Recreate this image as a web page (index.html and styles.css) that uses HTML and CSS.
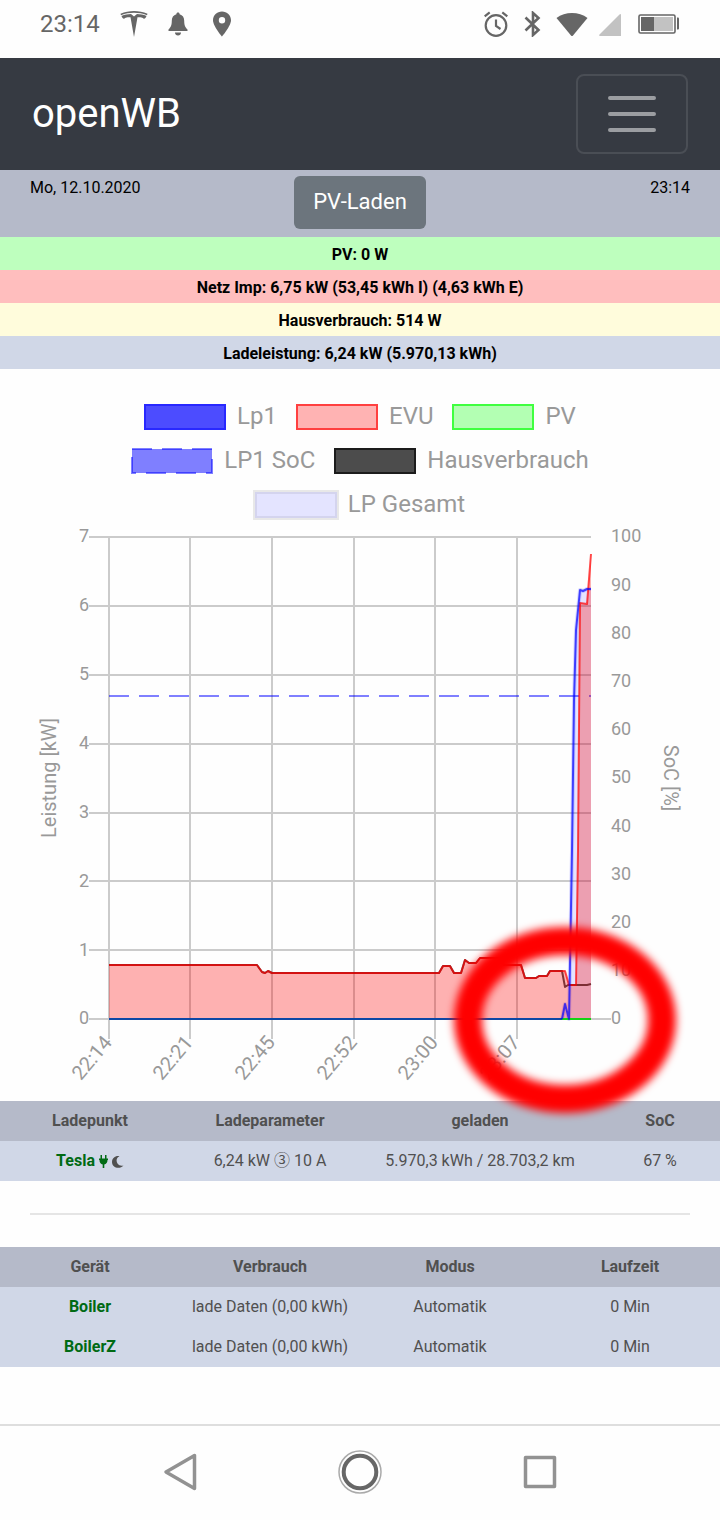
FILE: index.html
```html
<!DOCTYPE html>
<html lang="de">
<head>
  <meta charset="UTF-8">
  <meta name="viewport" content="width=device-width, initial-scale=1.0">
  <title>openWB</title>
  <link rel="stylesheet" href="styles.css">
</head>
<body>
  <!-- Status bar -->
  <div class="statusbar">
    <div class="status-left">
      <span class="status-time">23:14</span>
      <svg class="icon-tesla" width="28" height="28" viewBox="0 0 28 28">
        <path d="M.5 3.8C9 .2 19 .2 27.500 3.800L27 5.200C18.500 2 9.500 2 1 5.200Z"/>
        <path d="M1.500 6C4.500 4.800 8 4.200 11 4.100L14 6.500L17 4.100C20 4.200 23.500 4.800 26.500 6C26 7.500 25 8.500 23.800 9C23.500 7.800 22 7.300 17.500 7.300L14 27L10.500 7.300C6 7.300 4.500 7.800 4.200 9C3 8.500 2 7.500 1.500 6Z"/>
      </svg>
      <svg class="icon-bell" width="20" height="24" viewBox="0 0 20 24">
        <path d="M10 .5c1 0 1.600.7 1.600 1.700 3 .8 4.600 3.300 4.600 6.500 0 4.500 1 6.500 3.300 8.700v1.600H.5v-1.600C2.800 15.200 3.800 13.200 3.800 8.700c0-3.200 1.600-5.700 4.600-6.500C8.400 1.200 9 .5 10 .5z"/>
        <path d="M7 20.500h6c0 1.800-1.300 3-3 3s-3-1.200-3-3z"/>
      </svg>
      <svg class="icon-pin" width="18" height="26" viewBox="0 0 18 26">
        <path fill-rule="evenodd" d="M9 .5C4 .5 0 4.300 0 9.200C0 15 9 25.500 9 25.500S18 15 18 9.200C18 4.300 14 .5 9 .5zM9 6a3.200 3.200 0 1 1 0 6.400a3.200 3.200 0 1 1 0-6.400z"/>
      </svg>
    </div>
    <div class="status-right">
      <svg width="24" height="26" viewBox="0 0 24 26">
        <circle cx="12" cy="14.500" r="10.300" fill="none" stroke="#666" stroke-width="2.200"/>
        <path d="M12 8.500v6.500l4.500 3M.7 5.300l5-4M23.300 5.300l-5-4" fill="none" stroke="#666" stroke-width="2.200"/>
      </svg>
      <svg width="18" height="26" viewBox="0 0 18 26">
        <path d="M2.500 6.500L15.500 19L10 24V2l5.500 5L2.500 19.500" fill="none" stroke="#666" stroke-width="2.600"/>
      </svg>
      <svg width="32" height="26" viewBox="0 0 32 26">
        <path d="M.5 7C9 .2 23 .2 31.500 7L17 24.500Q16 25.500 15 24.500Z"/>
      </svg>
      <svg width="22" height="26" viewBox="0 0 22 26">
        <path d="M22 3.500V25H1Q-.5 24.500.5 23.500L20.500 3.500Q21.500 2.500 22 3.500z" fill="#c2c2c2"/>
      </svg>
      <svg width="42" height="26" viewBox="0 0 42 26">
        <rect x="1" y="4" width="36" height="18" rx="1.500" fill="none" stroke="#666" stroke-width="1.600"/>
        <rect x="3" y="6" width="13" height="14"/>
        <rect x="16" y="6" width="19" height="14" fill="#c2c2c2"/>
        <path d="M39 6.500h1q1 0 1 1v10q0 1-1 1h-1z"/>
      </svg>
    </div>
  </div>

  <!-- Navigation -->
  <nav class="navbar">
    <a class="navbar-brand" href="#">openWB</a>
    <button class="navbar-toggler" type="button" aria-label="Menü">
      <svg width="60" height="60" viewBox="0 0 30 30">
        <path d="M4 7h22M4 15h22M4 23h22" stroke="rgba(255,255,255,0.5)" stroke-width="2" stroke-linecap="round"/>
      </svg>
    </button>
  </nav>

  <main>
    <div class="date-row">
      <span class="date">Mo, 12.10.2020</span>
      <button class="mode-button" type="button">PV-Laden</button>
      <span class="time">23:14</span>
    </div>

    <div class="info-row pv">PV: 0 W</div>
    <div class="info-row evu">Netz Imp: 6,75 kW (53,45 kWh I) (4,63 kWh E)</div>
    <div class="info-row haus">Hausverbrauch: 514 W</div>
    <div class="info-row ladeleistung">Ladeleistung: 6,24 kW (5.970,13 kWh)</div>

    <!-- Live chart -->
    <div class="chart">
      <ul class="legend">
        <li><span class="swatch swatch-lp1"></span>Lp1</li>
        <li><span class="swatch swatch-evu"></span>EVU</li>
        <li><span class="swatch swatch-pv"></span>PV</li>
        <li>
          <svg class="swatch" width="82" height="26" viewBox="0 0 82 26">
            <rect x="1" y="1" width="80" height="24" fill="rgba(0,0,255,0.5)" stroke="rgba(0,0,255,0.5)" stroke-width="2" stroke-dasharray="20 10"/>
          </svg>LP1 SoC
        </li>
        <li><span class="swatch swatch-haus"></span>Hausverbrauch</li>
        <li><span class="swatch swatch-gesamt"></span>LP Gesamt</li>
      </ul>

      <svg class="plot" viewBox="0 0 720 575">
        <defs>
          <filter id="soft" x="-20%" y="-20%" width="140%" height="140%">
            <feGaussianBlur stdDeviation="4"/>
          </filter>
        </defs>

        <path class="grid" d="M89 11H591M89 80H591M89 149H591M89 218H591M89 287H591M89 355H591M89 424H591M89 493H611"/>
        <path class="grid" d="M109 11V513M190 11V513M272 11V513M354 11V513M435 11V513M517 11V513"/>

        <!-- LP Gesamt -->
        <path fill="rgba(0,0,255,0.1)" d="M562 493L565 478L569 493L572 324L574 174L576 104L580 64L583 65L587 63H591V493Z"/>
        <path class="line line-gesamt" stroke="rgba(0,0,255,0.15)" d="M562 493L565 478L569 493L572 324L574 174L576 104L580 64L583 65L587 63H591"/>
        <!-- Hausverbrauch -->
        <path class="line" stroke="rgba(0,0,0,0.7)" d="M109 439H257L262 446L265 447L268 445L272 447H439L443 440H450L454 447H461L465 434L469 437H476L480 432H500L504 439H521L525 452H536L539 450H547L550 445H562L565 461L568 459H587L591 458"/>
        <!-- SoC -->
        <path class="line" stroke="rgba(0,0,255,0.5)" stroke-dasharray="20 10" d="M109 170H591"/>
        <!-- EVU -->
        <path fill="rgba(255,0,0,0.3)" d="M109 439H257L262 446L265 447L268 445L272 447H439L443 440H450L454 447H461L465 434L469 437H476L480 432H500L504 439H521L525 452H536L539 450H547L550 445H565L569 459H576L578 324L580 77L587 78L591 28V493H109Z"/>
        <path class="line" stroke="rgba(255,0,0,0.7)" d="M109 439H257L262 446L265 447L268 445L272 447H439L443 440H450L454 447H461L465 434L469 437H476L480 432H500L504 439H521L525 452H536L539 450H547L550 445H565L569 459H576L578 324L580 77L587 78L591 28"/>
        <!-- PV -->
        <path class="line" stroke="#14d214" d="M109 493H591"/>
        <!-- Lp1 -->
        <path class="line" stroke="#0d47a5" d="M109 493H562"/>
        <path class="line" stroke="rgba(0,0,255,0.7)" d="M562 493L565 478L569 493L572 324L574 174L576 104L580 64L583 65L587 63H591"/>

        <g class="ticks" text-anchor="end">
          <text x="89" y="16">7</text>
          <text x="89" y="85">6</text>
          <text x="89" y="154">5</text>
          <text x="89" y="223">4</text>
          <text x="89" y="292">3</text>
          <text x="89" y="361">2</text>
          <text x="89" y="430">1</text>
          <text x="89" y="498">0</text>
        </g>
        <g class="ticks">
          <text x="611" y="16">100</text>
          <text x="611" y="65">90</text>
          <text x="611" y="113">80</text>
          <text x="611" y="161">70</text>
          <text x="611" y="209">60</text>
          <text x="611" y="257">50</text>
          <text x="611" y="306">40</text>
          <text x="611" y="354">30</text>
          <text x="611" y="402">20</text>
          <text x="611" y="450">10</text>
          <text x="611" y="498">0</text>
        </g>
        <g class="labels" text-anchor="end">
          <text transform="translate(113 517) rotate(-50)">22:14</text>
          <text transform="translate(194 517) rotate(-50)">22:21</text>
          <text transform="translate(276 517) rotate(-50)">22:45</text>
          <text transform="translate(358 517) rotate(-50)">22:52</text>
          <text transform="translate(439 517) rotate(-50)">23:00</text>
          <text transform="translate(521 517) rotate(-50)">23:07</text>
        </g>
        <g class="labels" text-anchor="middle">
          <text transform="translate(56 252) rotate(-90)">Leistung [kW]</text>
          <text transform="translate(664 252) rotate(90)">SoC [%]</text>
        </g>

        <!-- Marker -->
        <ellipse cx="565" cy="494" rx="97" ry="79" fill="none" stroke="#f00" stroke-width="28" filter="url(#soft)"/>
      </svg>
    </div>

    <!-- Charge points -->
    <table class="data-table">
      <colgroup>
        <col class="col-3"><col class="col-3"><col class="col-4"><col class="col-2">
      </colgroup>
      <thead>
        <tr><th>Ladepunkt</th><th>Ladeparameter</th><th>geladen</th><th>SoC</th></tr>
      </thead>
      <tbody>
        <tr>
          <td>
            <span class="name">Tesla</span>
            <svg class="icon-plug" width="9" height="13" viewBox="0 0 9 13">
              <path d="M1.500 0h1.500v3.500h3V0h1.500v3.500H9v1.500h-.5c0 2.800-1.200 4-3.200 4.400V13H3.700V9.400C1.700 9 .5 7.800.5 5H0V3.500h1.500z"/>
            </svg>
            <svg class="icon-moon" width="12" height="12" viewBox="0 0 12 12">
              <path d="M7.500.3C4.500 1.500 3.800 5 5.500 7.500C7 9.500 9 10 11.500 9.500C8 13.500 0 12.200 0 6C0 2 3.800-.6 7.500.3z"/>
            </svg>
          </td>
          <td>6,24 kW ③ 10 A</td>
          <td>5.970,3 kWh / 28.703,2 km</td>
          <td>67 %</td>
        </tr>
      </tbody>
    </table>

    <hr>

    <!-- Smart home devices -->
    <table class="data-table">
      <thead>
        <tr><th>Gerät</th><th>Verbrauch</th><th>Modus</th><th>Laufzeit</th></tr>
      </thead>
      <tbody>
        <tr>
          <td><span class="name">Boiler</span></td>
          <td>lade Daten (0,00 kWh)</td>
          <td>Automatik</td>
          <td>0 Min</td>
        </tr>
        <tr>
          <td><span class="name">BoilerZ</span></td>
          <td>lade Daten (0,00 kWh)</td>
          <td>Automatik</td>
          <td>0 Min</td>
        </tr>
      </tbody>
    </table>
  </main>

  <!-- System buttons -->
  <div class="system-nav">
    <button type="button" aria-label="Zurück">
      <svg width="44" height="44" viewBox="0 0 44 44">
        <path d="M36.500 5.500V38.500L8 22z" fill="none" stroke="#929292" stroke-width="3.500" stroke-linejoin="round"/>
      </svg>
    </button>
    <button type="button" aria-label="Startseite">
      <svg width="44" height="44" viewBox="0 0 44 44">
        <circle cx="22" cy="22" r="21" fill="none" stroke="#aaa" stroke-width="1.500"/>
        <circle cx="22" cy="22" r="16.300" fill="none" stroke="#666" stroke-width="4"/>
      </svg>
    </button>
    <button type="button" aria-label="Letzte Apps">
      <svg width="44" height="44" viewBox="0 0 44 44">
        <rect x="7.500" y="7.500" width="29" height="29" fill="none" stroke="#929292" stroke-width="3.500" stroke-linejoin="round"/>
      </svg>
    </button>
  </div>
</body>
</html>
```

FILE: styles.css
```css
* {
  box-sizing: border-box;
}

body {
  margin: 0;
  min-height: 100vh;
  display: flex;
  flex-direction: column;
  background-color: #fefefe;
  color: #505050;
  font-family: Roboto, "Noto Sans CJK JP", sans-serif;
  font-size: 16px;
  line-height: 24px;
}

main {
  flex: 1;
}

svg {
  display: block;
}

button {
  font-family: inherit;
  cursor: pointer;
}

/* Status bar */
.statusbar {
  display: flex;
  justify-content: space-between;
  align-items: center;
  height: 58px;
  padding: 0 40px 10px;
  color: #666;
  fill: #666;
}

.status-left,
.status-right {
  display: flex;
  align-items: center;
}

.status-left {
  gap: 20px;
}

.status-right {
  gap: 15px;
}

.status-right svg:nth-child(4) {
  margin-left: -4px;
}

.status-right svg:nth-child(5) {
  margin-left: 2px;
}

.icon-pin {
  margin-left: 5px;
}

.status-time {
  font-size: 24px;
}

/* Navigation */
.navbar {
  display: flex;
  justify-content: space-between;
  align-items: center;
  padding: 16px 32px;
  background-color: #363a42;
}

.navbar-brand {
  color: #fff;
  font-size: 40px;
  line-height: 60px;
  text-decoration: none;
}

.navbar-toggler {
  padding: 8px 24px;
  background: none;
  border: 2px solid rgba(255, 255, 255, 0.1);
  border-radius: 8px;
}

/* Date and charge mode */
.date-row {
  display: grid;
  grid-template-columns: 1fr auto 1fr;
  align-items: start;
  padding: 6px 30px 8px;
  background-color: #b5bac9;
  color: #000;
}

.time {
  text-align: right;
}

.mode-button {
  padding: 9px 19px 11px;
  background-color: #6c757d;
  color: #fff;
  border: none;
  border-radius: 6px;
  font-size: 22px;
  line-height: 33px;
}

/* Current values */
.info-row {
  padding: 6px 0 3px;
  color: #000;
  font-weight: bold;
  text-align: center;
}

.pv {
  background-color: #beffbe;
}

.evu {
  background-color: #ffbebe;
}

.haus {
  background-color: #fffcdc;
}

.ladeleistung {
  background-color: #d0d7e7;
}

/* Chart */
.chart {
  padding-top: 25px;
}

.legend {
  display: flex;
  flex-wrap: wrap;
  justify-content: center;
  column-gap: 19px;
  max-width: 624px;
  margin: 0 auto;
  padding: 0;
  list-style: none;
  color: #999;
  font-size: 24px;
  line-height: 44px;
}

.legend li {
  display: flex;
  align-items: center;
  gap: 11px;
}

.swatch {
  width: 82px;
  height: 26px;
  margin-top: 2px;
  border: 2px solid;
}

svg.swatch {
  border: none;
}

.swatch-lp1 {
  background-color: #4c4cff;
  border-color: #2828ff;
}

.swatch-evu {
  background-color: #ffb3b3;
  border-color: #ff4040;
}

.swatch-pv {
  background-color: #b3ffb3;
  border-color: #40ff40;
}

.swatch-haus {
  background-color: #4c4c4c;
  border-color: #1c1c1c;
}

.swatch-gesamt {
  background-color: #e4e4ff;
  border-color: #d4d4ee;
  outline: 2px solid #e8e8e8;
}

.plot {
  position: relative;
  width: 100%;
  overflow: visible;
  pointer-events: none;
}

.grid {
  fill: none;
  stroke: #cbcbcb;
  stroke-width: 2;
}

.line {
  fill: none;
  stroke-width: 2;
  stroke-linejoin: round;
}

.line-gesamt {
  stroke-width: 4;
}

.ticks {
  fill: #999;
  font-size: 18px;
}

.labels {
  fill: #999;
  font-size: 20px;
}

/* Tables */
.data-table {
  width: 100%;
  table-layout: fixed;
  border-collapse: collapse;
  text-align: center;
}

.data-table th,
.data-table td {
  height: 40px;
  padding: 0;
  line-height: 24px;
}

.data-table thead {
  background-color: #b5bac9;
}

.data-table tbody {
  background-color: #d0d7e7;
}

.data-table svg {
  display: inline-block;
  vertical-align: -2px;
}

.col-2 {
  width: 16.6667%;
}

.col-3 {
  width: 25%;
}

.col-4 {
  width: 33.3333%;
}

.name,
.icon-plug {
  color: #006a14;
  fill: #006a14;
  font-weight: bold;
}

.icon-moon {
  fill: #505050;
}

hr {
  margin: 32px 30px;
  border: none;
  border-top: 2px solid #e5e5e5;
}

/* System buttons */
.system-nav {
  display: flex;
  justify-content: center;
  gap: 136px;
  padding: 24px 0 26px;
  border-top: 2px solid #dedede;
}

.system-nav button {
  padding: 0;
  background: none;
  border: none;
}
```
